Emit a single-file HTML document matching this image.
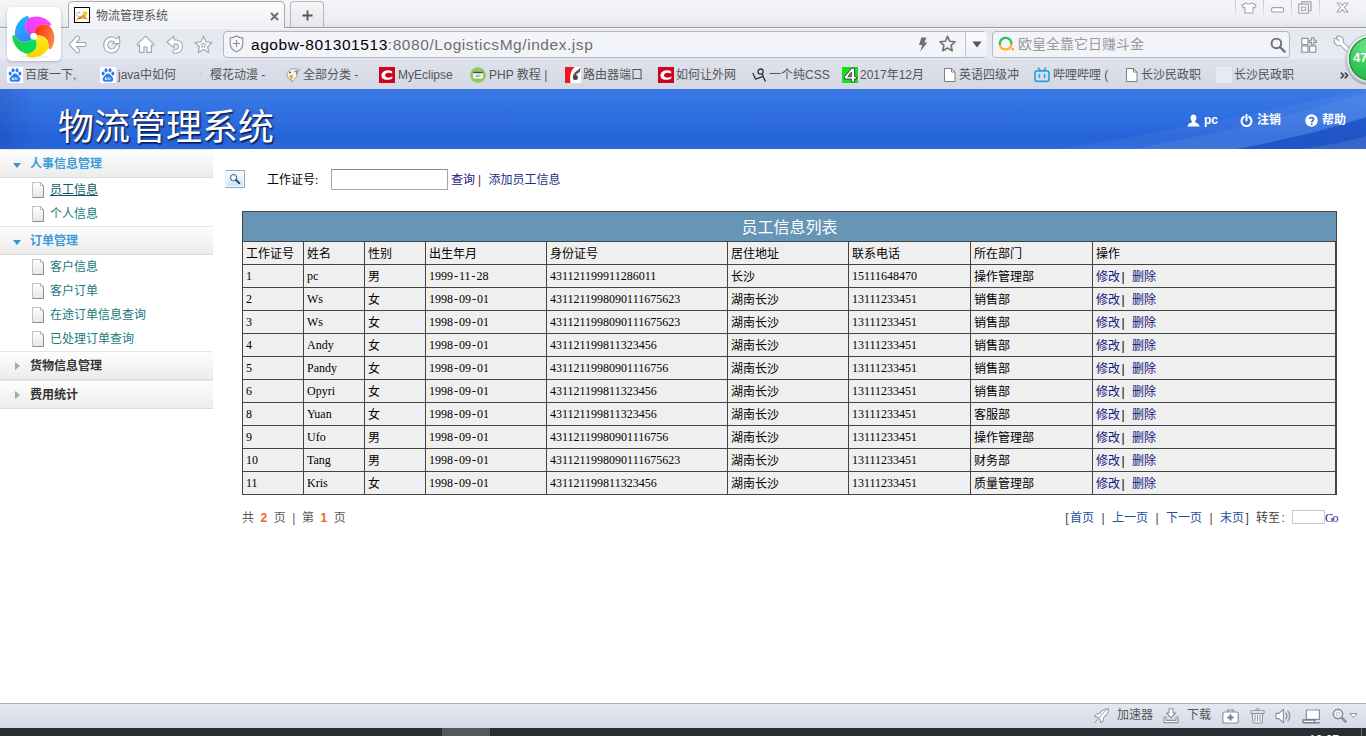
<!DOCTYPE html>
<html lang="zh-CN">
<head>
<meta charset="utf-8">
<title>物流管理系统</title>
<style>
*{box-sizing:border-box;margin:0;padding:0}
html,body{width:1366px;height:736px;overflow:hidden;background:#fff}
body{position:relative;font-family:"Liberation Sans","Noto Sans CJK SC",sans-serif;font-size:12px;color:#000}
.abs{position:absolute}
a{text-decoration:none;color:inherit}
/* ---------- browser chrome ---------- */
#chrome{position:absolute;left:0;top:0;width:1366px;height:89px;background:linear-gradient(#f4f5f7 0,#eceef2 20px,#e2e4ea 27px,#e6e8ef 28px,#e9ebf2 58px,#dfe2ec 60px,#d4d8e4 88px)}
#tabline{position:absolute;left:0;top:27px;width:1366px;height:1px;background:#9a9ca3}
#tabline2{position:absolute;left:0;top:28px;width:1366px;height:1px;background:#f6f7fa}
#tab{position:absolute;left:68px;top:1px;width:217px;height:27px;background:linear-gradient(#fcfcfd,#eff0f4);border:1px solid #a9abb2;border-bottom:none;border-radius:5px 5px 0 0}
#tab .t{position:absolute;left:27px;top:6px;font-size:12px;color:#555;white-space:nowrap;line-height:16px}
#tab .x{position:absolute;left:201px;top:10px;width:9px;height:9px}
#newtab{position:absolute;left:290px;top:1px;width:34px;height:26px;background:linear-gradient(#f6f6f8,#e6e7ec);border:1px solid #b5b7be;border-bottom:none;border-radius:4px 4px 0 0}
#logo{position:absolute;left:7px;top:7px;width:54px;height:54px;background:#fff;border-radius:5px;box-shadow:0 1px 3px rgba(80,90,120,.35)}
#addr{position:absolute;left:223px;top:31px;width:764px;height:27px;border:1px solid #b4b7c0;border-radius:4px;background:#f3f4f9}
#addr .u{position:absolute;left:27px;top:4px;font-size:15.5px;line-height:18px;white-space:nowrap;color:#6e6e6e;letter-spacing:.56px}
#addr .u b{font-weight:normal;color:#000}
#addr .sep{position:absolute;left:741px;top:0;width:22px;height:25px;border-left:1px solid #c0c3cb;background:linear-gradient(#fafbfd,#eef0f5);border-radius:0 3px 3px 0}
#srch{position:absolute;left:992px;top:31px;width:298px;height:27px;border:1px solid #b4b7c0;border-radius:4px;background:#f3f4f9}
#srch .p{position:absolute;left:25px;top:4px;font-size:14px;line-height:17px;color:#9a9a9a;white-space:nowrap}
.bm{position:absolute;top:66px;height:18px;line-height:18px;font-size:12px;color:#555;white-space:nowrap}
.bi{position:absolute;top:67px;width:16px;height:16px}
/* ---------- app header ---------- */
#hdr{position:absolute;left:0;top:89px;width:1366px;height:60px;background:linear-gradient(90deg,rgba(0,10,90,.14),rgba(0,10,90,0) 36px),linear-gradient(#3a79e6 0,#2f6ee0 28px,#2563d9 48px,#2a67da 60px);overflow:hidden}
#hdr h1{position:absolute;left:58px;top:15px;font-size:36px;line-height:48px;font-weight:400;color:#fff;white-space:nowrap;text-shadow:1px 1px 2px rgba(0,0,40,.8),1px 2px 1px rgba(0,0,40,.35);letter-spacing:0}
.hl{position:absolute;top:23px;font-size:12px;font-weight:bold;line-height:16px;color:#fff;white-space:nowrap}
/* ---------- sidebar ---------- */
#side{position:absolute;left:0;top:149px;width:213px}
.sh{height:29px;border-bottom:1px solid #dcdcdc;border-top:1px solid #e6e6e6;background:linear-gradient(#fdfdfd,#ececec);position:relative;font-weight:bold;font-size:12px;line-height:28px;padding-left:30px;color:#333}
.sh.open{color:#3c9bd8}
.sh i{position:absolute}
.sh.open i{left:13px;top:13px;border:4.5px solid transparent;border-top:5px solid #3399d4;border-bottom:none}
.sh.closed i{left:15px;top:10px;border:4.5px solid transparent;border-left:5px solid #a8a8a8;border-right:none}
.si{height:24px;position:relative;line-height:24px;padding-left:50px;font-size:12px;color:#167a7c;white-space:nowrap}
.si svg{position:absolute;left:32px;top:4px}
/* ---------- main ---------- */
.sim{font-family:"Liberation Serif","Noto Sans CJK SC",serif;font-size:12px;word-spacing:3px}
.hy,.vb{display:inline-block;width:6px;text-align:center}
.vb{font-family:"Liberation Sans",sans-serif}
#tbl{position:absolute;left:242px;top:211px;width:1094px;border-collapse:collapse;table-layout:fixed;background:#efefef}
#tbl td,#tbl th{border:1px solid #444;height:23px;padding:0 0 0 3px;text-align:left;font-weight:normal;font-size:12px;line-height:14px;white-space:nowrap;overflow:hidden;vertical-align:middle}
#tbl th,#tbl td.c{padding-top:2px}
#tbl th.cap{height:30px;background:#6795b5;color:#fff;text-align:center;font-size:16px;font-family:"Liberation Sans","Noto Sans CJK SC",sans-serif;padding:2px 0 0 0}
#tbl a{color:#15157a}
#sbtn{position:absolute;left:225px;top:170px;width:20px;height:18px;background:linear-gradient(#f6f9fe,#e6f1fc 45%,#cbe4fa);border:1px solid #8faacb;border-left-color:#dbe8f6;box-shadow:inset 0 0 0 1px rgba(255,255,255,.7)}
#sinp{position:absolute;left:331px;top:169px;width:117px;height:21px;background:#fff;border:1px solid #a5a5a5;border-top-color:#8a8a8a}
#pgl{position:absolute;left:242px;top:509px;font-size:12px;line-height:18px;color:#5a5a5a;white-space:nowrap;letter-spacing:1px;word-spacing:1.2px}
#pgl b{color:#f26522}
#pgr{position:absolute;left:1064px;top:509px;font-size:12px;line-height:18px;color:#444;white-space:nowrap}
#pgr a{color:#1d4f9c}
#pgr .gi{display:inline-block;width:33px;height:14px;border:1px solid #c8c8c8;background:#fff;vertical-align:-2px;margin:0}
#pgr .go{color:#1a1aa0;letter-spacing:-1.3px}
/* ---------- status ---------- */
#status{position:absolute;left:0;top:703px;width:1366px;height:25px;background:linear-gradient(#e4e8f0,#d5dae6);border-top:1px solid #a9afbd}
#task{position:absolute;left:0;top:728px;width:1366px;height:8px;background:#2a2e32;overflow:hidden}
</style>
</head>
<body>
<div id="chrome">
  <div id="tabline"></div><div id="tabline2"></div>
  <div id="tab"><svg class="abs" style="left:5px;top:5px" width="16" height="16" viewBox="0 0 16 16"><rect x=".5" y=".5" width="15" height="15" fill="#fff" stroke="#000"/><path d="M5.6 9.4 C3.6 9.6 2.2 8.2 2.6 6.6 C3 5 4.6 4.6 5.8 5.4" fill="none" stroke="#9a9a9a" stroke-width=".8"/><path d="M8.4 3.2 L9.4 4.8 H12 L13 3.2 L13.2 7.6 L11.6 9.4 L9.4 9 Z" fill="#f0c24a"/><path d="M9.2 7.6 L4.6 10 L1.6 13.4 L5 12.2 L8.8 11.4 L14 12.8 L11.4 9.6 Z" fill="#dc9c2c"/><path d="M5.2 5.6 L6.6 6.2 L5.8 6.8 Z M5.4 11 L6.6 11.8 L5.6 12 Z" fill="#222"/></svg><span class="t">物流管理系统</span><svg class="x" viewBox="0 0 9 9"><path d="M1 1 L8 8 M8 1 L1 8" stroke="#6b6b6b" stroke-width="1.8"/></svg></div>
  <div id="newtab"><svg class="abs" style="left:11px;top:8px" width="11" height="11" viewBox="0 0 11 11"><path d="M5.5 .5 V10.5 M.5 5.5 H10.5" stroke="#555" stroke-width="1.8"/></svg></div>
  <div id="logo"><svg width="54" height="54" viewBox="0 0 54 54"><defs><linearGradient id="pg0" x1=".15" y1="1" x2=".95" y2=".2"><stop offset="0" stop-color="#e03cf3"/><stop offset="1" stop-color="#ff48ff"/></linearGradient><linearGradient id="pg1" x1=".15" y1="1" x2=".95" y2=".2"><stop offset="0" stop-color="#ff2810"/><stop offset="1" stop-color="#ff8e44"/></linearGradient><linearGradient id="pg2" x1=".15" y1="1" x2=".95" y2=".2"><stop offset="0" stop-color="#ffea20"/><stop offset="1" stop-color="#ffd000"/></linearGradient><linearGradient id="pg3" x1=".15" y1="1" x2=".95" y2=".2"><stop offset="0" stop-color="#00e45c"/><stop offset="1" stop-color="#22cf4c"/></linearGradient><linearGradient id="pg4" x1=".15" y1="1" x2=".95" y2=".2"><stop offset="0" stop-color="#3b7eff"/><stop offset="1" stop-color="#1ab4ff"/></linearGradient></defs><ellipse cx="27" cy="50" rx="15" ry="1.6" fill="#000" fill-opacity=".05"/><g transform="translate(26.8 29.3)"><path d="M-2.9 -1.4 C-9.0 -4.0 -11.0 -12.0 -4.9 -18.2 A18.5 18.5 0 0 1 17.7 -12.0 L15.8 -10.2 C8.0 -14.2 1.0 -9.8 0.4 -3.2 Z" fill="url(#pg0)" transform="rotate(0)"/><path d="M-2.9 -1.4 C-9.0 -4.0 -11.0 -12.0 -4.9 -18.2 A18.5 18.5 0 0 1 17.7 -12.0 L15.8 -10.2 C8.0 -14.2 1.0 -9.8 0.4 -3.2 Z" fill="url(#pg1)" transform="rotate(72)"/><path d="M-2.9 -1.4 C-9.0 -4.0 -11.0 -12.0 -4.9 -18.2 A18.5 18.5 0 0 1 17.7 -12.0 L15.8 -10.2 C8.0 -14.2 1.0 -9.8 0.4 -3.2 Z" fill="url(#pg2)" transform="rotate(144)"/><path d="M-2.9 -1.4 C-9.0 -4.0 -11.0 -12.0 -4.9 -18.2 A18.5 18.5 0 0 1 17.7 -12.0 L15.8 -10.2 C8.0 -14.2 1.0 -9.8 0.4 -3.2 Z" fill="url(#pg3)" transform="rotate(216)"/><path d="M-2.9 -1.4 C-9.0 -4.0 -11.0 -12.0 -4.9 -18.2 A18.5 18.5 0 0 1 17.7 -12.0 L15.8 -10.2 C8.0 -14.2 1.0 -9.8 0.4 -3.2 Z" fill="url(#pg4)" transform="rotate(288)"/><circle r="3.4" fill="#fff"/></g></svg></div>

  <svg class="abs" style="left:69px;top:35px" width="18" height="19" viewBox="0 0 18 19"><g fill="none" stroke-linecap="round" stroke-linejoin="round"><path d="M8.6 3.2 L2.8 9.5 L8.6 15.8 M3.4 9.5 H15.2" stroke="#a3a5ab" stroke-width="5"/><path d="M8.6 3.2 L2.8 9.5 L8.6 15.8 M3.4 9.5 H15.2" stroke="#fff" stroke-width="3"/></g></svg>
  <svg class="abs" style="left:102px;top:35px" width="19" height="19" viewBox="0 0 19 19"><path d="M14 5.8 A6 6 0 1 0 15.4 11.6" fill="none" stroke="#a3a5ab" stroke-width="5" stroke-linecap="round"/><path d="M10.8 8.8 L17.8 8.4 L17.4 1.2 Z" fill="#fff" stroke="#a3a5ab" stroke-width="1.1" stroke-linejoin="round"/><path d="M14 5.8 A6 6 0 1 0 15.4 11.6" fill="none" stroke="#fff" stroke-width="3" stroke-linecap="round"/><path d="M12 8 L17 7.7 L16.7 2.8 Z" fill="#fff"/></svg>
  <svg class="abs" style="left:136px;top:35px" width="19" height="19" viewBox="0 0 19 19"><path d="M9.5 1.2 L18 9.4 L16.6 10.8 L15.4 9.8 V17.4 H11 V12 H8 V17.4 H3.6 V9.8 L2.4 10.8 L1 9.4 Z" fill="#fff" stroke="#a3a5ab" stroke-width="1.1" stroke-linejoin="round"/></svg>
  <svg class="abs" style="left:166px;top:35px" width="19" height="19" viewBox="0 0 19 19"><path d="M6 7 H10.8 A4.7 4.7 0 0 1 10.8 16.2 L8.8 16.4" fill="none" stroke="#a3a5ab" stroke-width="4.8" stroke-linecap="round"/><path d="M1 7 L8 1.2 V12.8 Z" fill="#fff" stroke="#a3a5ab" stroke-width="1.1" stroke-linejoin="round"/><path d="M6 7 H10.8 A4.7 4.7 0 0 1 10.8 16.2 L8.8 16.4" fill="none" stroke="#fff" stroke-width="2.8" stroke-linecap="round"/></svg>
  <svg class="abs" style="left:194px;top:35px" width="19" height="19" viewBox="0 0 19 19"><path d="M9.5 1.2 L12 6.8 L18 7.5 L13.6 11.6 L14.8 17.6 L9.5 14.6 L4.2 17.6 L5.4 11.6 L1 7.5 L7 6.8 Z" fill="#fff" stroke="#a3a5ab" stroke-width="1.2" stroke-linejoin="round"/><path d="M9.5 7.4 L10.3 9.2 L12.2 9.4 L10.8 10.7 L11.2 12.6 L9.5 11.6 L7.8 12.6 L8.2 10.7 L6.8 9.4 L8.7 9.2 Z" fill="#eceef3" stroke="#a3a5ab" stroke-width=".9" stroke-linejoin="round"/></svg>
  <div id="addr"><span class="u"><b>agobw-801301513</b>:8080/LogisticsMg/index.jsp</span><div class="sep"></div>
    <svg class="abs" style="left:5px;top:3px" width="15" height="18" viewBox="0 0 15 18"><path d="M7.5 1 C5.5 2.4 3.5 2.9 1.2 3 V9 C1.2 12.6 4 15.4 7.5 16.8 C11 15.4 13.8 12.6 13.8 9 V3 C11.5 2.9 9.5 2.4 7.5 1 Z" fill="#f6f7fa" stroke="#8a8c92" stroke-width="1.1"/><path d="M7.5 5 V12 M4 8.5 H11" stroke="#8a8c92" stroke-width="1.1"/></svg>
    <svg class="abs" style="left:694px;top:5px" width="10" height="15" viewBox="0 0 10 15"><path d="M3.4 .5 H8.6 L6.4 5.6 H9.4 L2.2 14.5 L4.2 8 H1 Z" fill="#6f6f6f"/></svg>
    <svg class="abs" style="left:715px;top:3px" width="17" height="17" viewBox="0 0 17 17"><path d="M8.5 1.3 L10.7 6.2 L16 6.8 L12.1 10.4 L13.2 15.7 L8.5 13 L3.8 15.7 L4.9 10.4 L1 6.8 L6.3 6.2 Z" fill="none" stroke="#727272" stroke-width="1.6" stroke-linejoin="round"/></svg>
    <svg class="abs" style="left:748px;top:9px" width="10" height="7" viewBox="0 0 10 7"><path d="M.4 .6 H9.6 L5 6.4 Z" fill="#555"/></svg>
  </div>
  <div id="srch"><svg class="abs" style="left:4.5px;top:4px" width="17" height="16" viewBox="0 0 17 16"><path d="M2 9 A5.8 5.8 0 1 1 13.4 8.2" fill="none" stroke="#27c24c" stroke-width="2.3"/><path d="M13.4 8.2 A5.8 5.8 0 0 1 2 9" fill="none" stroke="#ffb61e" stroke-width="2.3"/><circle cx="14.8" cy="13.2" r="1.2" fill="#ff9a1a"/></svg><svg class="abs" style="left:277px;top:5px" width="16" height="16" viewBox="0 0 16 16"><circle cx="6.4" cy="6.4" r="4.8" fill="none" stroke="#6f6f6f" stroke-width="1.9"/><path d="M10 10 L14.6 14.6" stroke="#6f6f6f" stroke-width="2.4" stroke-linecap="round"/></svg><span class="p">欧皇全靠它日赚斗金</span></div>
  <svg class="bi" style="left:7px" viewBox="0 0 16 16"><rect width="16" height="16" fill="#fff"/><g fill="#2b7cf0"><ellipse cx="3.1" cy="6.6" rx="1.5" ry="2"/><ellipse cx="6" cy="3.3" rx="1.5" ry="2.1"/><ellipse cx="10" cy="3.3" rx="1.5" ry="2.1"/><ellipse cx="12.9" cy="6.6" rx="1.5" ry="2"/><path d="M8 6.6 C10 6.6 10.8 8.6 12.4 10 C14 11.6 13.4 14.6 11 14.8 C9.6 14.9 9 14.4 8 14.4 C7 14.4 6.4 14.9 5 14.8 C2.6 14.6 2 11.6 3.6 10 C5.2 8.6 6 6.6 8 6.6 Z"/></g><path d="M5.4 10.4 V12.6 H7 V10.4 M8.6 10.6 V12 C8.6 12.8 10.2 12.8 10.2 12 V10.6" stroke="#fff" stroke-width=".9" fill="none"/></svg>
  <span class="bm" style="left:25px">百度一下,</span>
  <svg class="bi" style="left:100px" viewBox="0 0 16 16"><rect width="16" height="16" fill="#fff"/><g fill="#2b7cf0"><ellipse cx="3.1" cy="6.6" rx="1.5" ry="2"/><ellipse cx="6" cy="3.3" rx="1.5" ry="2.1"/><ellipse cx="10" cy="3.3" rx="1.5" ry="2.1"/><ellipse cx="12.9" cy="6.6" rx="1.5" ry="2"/><path d="M8 6.6 C10 6.6 10.8 8.6 12.4 10 C14 11.6 13.4 14.6 11 14.8 C9.6 14.9 9 14.4 8 14.4 C7 14.4 6.4 14.9 5 14.8 C2.6 14.6 2 11.6 3.6 10 C5.2 8.6 6 6.6 8 6.6 Z"/></g><path d="M5.4 10.4 V12.6 H7 V10.4 M8.6 10.6 V12 C8.6 12.8 10.2 12.8 10.2 12 V10.6" stroke="#fff" stroke-width=".9" fill="none"/></svg>
  <span class="bm" style="left:118px">java中如何</span>
  <span class="bm" style="left:210px">樱花动漫 -</span>
  <svg class="bi" style="left:285px" viewBox="0 0 16 16"><path d="M2 8 C2 4 6 1.4 10 1.6 C12.6 1.7 14.6 2.6 15 3.4 L12.6 4 C13.4 7 11.4 11 8.6 13 L7 15 L6.4 12.6 C3.6 12.4 2 10.4 2 8 Z" fill="#f4f4f4" stroke="#8a8a8a" stroke-width=".8"/><circle cx="6.2" cy="9.8" r="2" fill="#f2b01e"/><circle cx="5" cy="5.4" r=".9" fill="#444"/><path d="M9 4.4 L12 3.6 L11.4 7.4" fill="none" stroke="#666" stroke-width=".9"/></svg>
  <span class="bm" style="left:303px">全部分类 -</span>
  <svg class="bi" style="left:379px" viewBox="0 0 16 16"><rect width="16" height="16" fill="#d0021b"/><path d="M13.2 4.6 C11.4 3.2 8.4 2.8 6 3.8 C3.4 4.9 2.2 7 2.4 9 C2.6 11.2 4.6 12.6 7.2 12.8 C9.6 13 12 12.2 13.4 11.2 L13.4 9.6 C12 10.4 10.2 10.8 8.6 10.6 C7 10.4 6 9.4 6 8.2 C6 7 7 6.1 8.6 5.9 C10.2 5.7 12 6 13.2 6.6 Z" fill="#fff"/></svg>
  <span class="bm" style="left:398px">MyEclipse</span>
  <svg class="bi" style="left:470px" viewBox="0 0 16 16"><circle cx="8" cy="8" r="7.8" fill="#8ccc4d"/><rect x="3.2" y="4.6" width="9.6" height="7" rx=".8" fill="#fff"/><rect x="3.2" y="4.6" width="9.6" height="1.6" fill="#3b4a5a"/><path d="M6.8 7.6 L5.6 8.8 L6.8 10 M9.2 7.6 L10.4 8.8 L9.2 10 M8.4 7.4 L7.6 10.2" stroke="#3b4a5a" stroke-width=".7" fill="none"/></svg>
  <span class="bm" style="left:489px">PHP 教程 |</span>
  <svg class="bi" style="left:565px" viewBox="0 0 16 16"><rect width="16" height="16" fill="#fff"/><path d="M0 0 H9.6 C6 3.4 4.4 8 5.4 16 H0 Z" fill="#f0141e"/><path d="M8 9.4 C8 7 10 5 12.4 3.4 L15.6 .6 L14.8 5.2 C13.6 5.4 12.4 6.2 11.8 7.2 Z" fill="#555"/><circle cx="10.4" cy="10.6" r="2.5" fill="#444"/></svg>
  <span class="bm" style="left:583px">路由器端口</span>
  <svg class="bi" style="left:658px" viewBox="0 0 16 16"><rect width="16" height="16" fill="#d0021b"/><path d="M13.2 4.6 C11.4 3.2 8.4 2.8 6 3.8 C3.4 4.9 2.2 7 2.4 9 C2.6 11.2 4.6 12.6 7.2 12.8 C9.6 13 12 12.2 13.4 11.2 L13.4 9.6 C12 10.4 10.2 10.8 8.6 10.6 C7 10.4 6 9.4 6 8.2 C6 7 7 6.1 8.6 5.9 C10.2 5.7 12 6 13.2 6.6 Z" fill="#fff"/></svg>
  <span class="bm" style="left:676px">如何让外网</span>
  <svg class="bi" style="left:752px" viewBox="0 0 16 16"><circle cx="8.6" cy="4.6" r="2.6" fill="none" stroke="#333" stroke-width="1.3"/><path d="M.8 6 L3.6 12.2 L11 9.4 L13.6 14.6 M11 9.4 L10.6 6.8" fill="none" stroke="#333" stroke-width="1.3" stroke-linejoin="round"/></svg>
  <span class="bm" style="left:769px">一个纯CSS</span>
  <svg class="bi" style="left:842px" viewBox="0 0 16 16"><rect width="16" height="16" fill="#18e01e"/><path d="M9.6 1.2 H12.6 V9.6 H14.4 V12 H12.6 V15 H9.4 V12 H2.4 V9.8 Z M9.4 5.2 L6 9.6 H9.4 Z" fill="#fff" stroke="#444" stroke-width="1" fill-rule="evenodd"/></svg>
  <span class="bm" style="left:860px">2017年12月</span>
  <svg class="bi" style="left:942px" viewBox="0 0 16 16"><path d="M2.5 1.5 H9.5 L13 5 V14.5 H2.5 Z" fill="#fff" stroke="#7b7d84"/><path d="M9.5 1.5 V5 H13" fill="none" stroke="#7b7d84"/></svg>
  <span class="bm" style="left:959px">英语四级冲</span>
  <svg class="bi" style="left:1034px" viewBox="0 0 16 16"><path d="M4.4 1 L6.4 3.6 M11.6 1 L9.6 3.6" stroke="#20a6de" stroke-width="1.5" stroke-linecap="round"/><rect x="1" y="3.8" width="14" height="10.6" rx="2.2" fill="none" stroke="#20a6de" stroke-width="1.7"/><path d="M5.4 7.6 V10.4 M10.6 7.6 V10.4" stroke="#20a6de" stroke-width="1.6" stroke-linecap="round"/></svg>
  <span class="bm" style="left:1053px">哔哩哔哩 (</span>
  <svg class="bi" style="left:1124px" viewBox="0 0 16 16"><path d="M2.5 1.5 H9.5 L13 5 V14.5 H2.5 Z" fill="#fff" stroke="#7b7d84"/><path d="M9.5 1.5 V5 H13" fill="none" stroke="#7b7d84"/></svg>
  <span class="bm" style="left:1141px">长沙民政职</span>
  <svg class="bi" style="left:1216px" viewBox="0 0 16 16"><rect width="16" height="16" fill="#e8ebf6"/></svg>
  <span class="bm" style="left:1234px">长沙民政职</span>
  <svg class="abs" style="left:1340px;top:72px" width="9" height="7" viewBox="0 0 9 7"><path d="M.8 .6 L3.6 3.5 L.8 6.4 M4.8 .6 L7.6 3.5 L4.8 6.4" fill="none" stroke="#4a4a4a" stroke-width="1.7"/></svg>
  <div class="abs" style="left:199px;top:73px;width:3px;height:2px;background:#f6b8d6;border-radius:1px"></div>

  <div class="abs" style="left:1235px;top:0;width:1px;height:16px;background:linear-gradient(#c3c5cc,#e9eaee)"></div>
  <div class="abs" style="left:1263px;top:0;width:1px;height:16px;background:linear-gradient(#c3c5cc,#e9eaee)"></div>
  <div class="abs" style="left:1291px;top:0;width:1px;height:16px;background:linear-gradient(#c3c5cc,#e9eaee)"></div>
  <div class="abs" style="left:1319px;top:0;width:1px;height:16px;background:linear-gradient(#c3c5cc,#e9eaee)"></div>
  <svg class="abs" style="left:1241px;top:2px" width="16" height="12" viewBox="0 0 16 12"><path d="M5 1 C6 2.4 10 2.4 11 1 L15 3 L13.6 6 L12 5.4 V11 H4 V5.4 L2.4 6 L1 3 Z" fill="#fff" stroke="#a2a4ab" stroke-width="1.1" stroke-linejoin="round"/></svg>
  <svg class="abs" style="left:1271px;top:7px" width="13" height="6" viewBox="0 0 13 6"><rect x=".6" y=".6" width="11.8" height="4.4" rx="1" fill="#fff" stroke="#a2a4ab" stroke-width="1.1"/></svg>
  <svg class="abs" style="left:1298px;top:1px" width="14" height="13" viewBox="0 0 14 13"><path d="M3.6 3 V.8 H13 V9.6 H10.6" fill="none" stroke="#a2a4ab" stroke-width="1.2"/><rect x=".8" y="3.2" width="9.6" height="9" fill="#fff" stroke="#a2a4ab" stroke-width="1.2"/><rect x="3.4" y="6" width="4.4" height="3.6" fill="#eef" stroke="#a2a4ab" stroke-width="1"/></svg>
  <svg class="abs" style="left:1336px;top:2px" width="13" height="11" viewBox="0 0 13 11"><path d="M1 1 H4.4 L6.5 3.6 L8.6 1 H12 L8.4 5.5 L12 10 H8.6 L6.5 7.4 L4.4 10 H1 L4.6 5.5 Z" fill="#fff" stroke="#a2a4ab" stroke-width="1.1" stroke-linejoin="round"/></svg>
  <svg class="abs" style="left:1301px;top:37px" width="16" height="16" viewBox="0 0 16 16"><g fill="#fff" stroke="#8b8d94" stroke-width="1.1"><rect x=".8" y="1.4" width="6.2" height="6.2"/><rect x=".8" y="9" width="6.2" height="6.2"/><rect x="8.6" y="9" width="6.2" height="6.2"/><path d="M10.6 .8 H12.8 V3.2 H15.2 V5.4 H12.8 V7.8 H10.6 V5.4 H8.2 V3.2 H10.6 Z"/></g></svg>
  <svg class="abs" style="left:1333px;top:35px" width="22" height="22" viewBox="0 0 22 22"><path d="M8 8 L20 19.6" stroke="#a0a2a9" stroke-width="5.2" stroke-linecap="round" fill="none"/><circle cx="5.8" cy="5.8" r="4.7" fill="#fff" stroke="#a0a2a9" stroke-width="1.1"/><path d="M8 8 L20 19.6" stroke="#fff" stroke-width="3.2" stroke-linecap="round" fill="none"/><path d="M-.5 2.6 L5.4 4 L6.6 6.4 L4.4 6.2 L2.6 -.5 Z" fill="#e9ebf2"/><path d="M1.4 3.2 L5.4 4.2 L6.4 6.4 M3.2 1.4 L4.2 5.4" fill="none" stroke="#a0a2a9" stroke-width="1" stroke-linejoin="round"/></svg>
  <div class="abs" style="left:1346px;top:34px;width:50px;height:50px;border-radius:50%;background:linear-gradient(#f4f5f7,#d9dce2);box-shadow:0 1px 2px rgba(0,0,0,.45),inset 0 0 0 1px #b9bcc4"></div>
  <div class="abs" style="left:1349px;top:37px;width:44px;height:44px;border-radius:50%;background:radial-gradient(circle at 38% 22%,#6ee08a,#3ccb5c 40%,#27b84a 75%,#1da040);box-shadow:inset 0 0 0 1px #148a34"></div>
  <div class="abs" style="left:1353px;top:50px;font:bold 13px/16px 'Liberation Sans',sans-serif;color:#fff;white-space:nowrap">47</div>
</div>
<div id="hdr">
  <svg class="abs" style="left:0;top:0" width="1366" height="60" viewBox="0 0 1366 60"><path d="M1060 60 C1180 40 1290 18 1366 0 V60 Z" fill="#fff" fill-opacity=".05"/><path d="M1133 60 C1220 44 1300 24 1366 4 V60 Z" fill="#fff" fill-opacity=".06"/><path d="M1236 60 C1290 50 1330 40 1366 28 V60 Z" fill="#0a3cb4" fill-opacity=".55"/><path d="M1300 60 C1330 56 1350 52 1366 47 V60 Z" fill="#fff" fill-opacity=".10"/></svg>
  <h1>物流管理系统</h1>
  <svg class="abs" style="left:1187px;top:25px" width="13" height="13" viewBox="0 0 13 13"><path d="M6.5 .6 C8.4 .6 9.4 2 9.4 3.8 C9.4 5.4 8.8 6.6 8 7.4 V8.2 C9.6 8.8 12.2 9.6 12.6 12.4 H.4 C.8 9.6 3.4 8.8 5 8.2 V7.4 C4.2 6.6 3.6 5.4 3.6 3.8 C3.6 2 4.6 .6 6.5 .6 Z" fill="#fff"/></svg>
  <span class="hl" style="left:1204px">pc</span>
  <svg class="abs" style="left:1240px;top:25px" width="13" height="13" viewBox="0 0 13 13"><path d="M3.8 2.8 A5 5 0 1 0 9.2 2.8" fill="none" stroke="#fff" stroke-width="2" stroke-linecap="round"/><path d="M6.5 .8 V6.4" stroke="#fff" stroke-width="2" stroke-linecap="round"/></svg>
  <span class="hl" style="left:1257px">注销</span>
  <svg class="abs" style="left:1305px;top:25px" width="13" height="13" viewBox="0 0 13 13"><circle cx="6.5" cy="6.5" r="6.2" fill="#fff"/><path d="M4.6 5 C4.6 3 8.6 3 8.6 5.2 C8.6 6.6 6.7 6.6 6.7 8.2" fill="none" stroke="#2a66dc" stroke-width="1.6"/><rect x="5.9" y="9.2" width="1.6" height="1.6" fill="#2a66dc"/></svg>
  <span class="hl" style="left:1322px">帮助</span>
</div>
<svg width="0" height="0" style="position:absolute"><defs><linearGradient id="dg" x1="0" y1="0" x2="0" y2="1"><stop offset="0" stop-color="#fff"/><stop offset="1" stop-color="#e6e6e6"/></linearGradient></defs></svg>
<div id="side">
  <div class="sh open"><i></i>人事信息管理</div>
  <div class="si"><svg width="13" height="16" viewBox="0 0 13 16"><path d="M.5 .5h8l3 3v12h-11z" fill="url(#dg)" stroke="#c2c2c2"/><path d="M11.5 3.5v12h-11" fill="none" stroke="#8e8e8e"/><path d="M8.5 .5v3h3z" fill="#fff" stroke="#a8a8a8" stroke-width=".8"/></svg><span style="text-decoration:underline;color:#0a5c5e">员工信息</span></div>
  <div class="si"><svg width="13" height="16" viewBox="0 0 13 16"><path d="M.5 .5h8l3 3v12h-11z" fill="url(#dg)" stroke="#c2c2c2"/><path d="M11.5 3.5v12h-11" fill="none" stroke="#8e8e8e"/><path d="M8.5 .5v3h3z" fill="#fff" stroke="#a8a8a8" stroke-width=".8"/></svg>个人信息</div>
  <div class="sh open"><i></i>订单管理</div>
  <div class="si"><svg width="13" height="16" viewBox="0 0 13 16"><path d="M.5 .5h8l3 3v12h-11z" fill="url(#dg)" stroke="#c2c2c2"/><path d="M11.5 3.5v12h-11" fill="none" stroke="#8e8e8e"/><path d="M8.5 .5v3h3z" fill="#fff" stroke="#a8a8a8" stroke-width=".8"/></svg>客户信息</div>
  <div class="si"><svg width="13" height="16" viewBox="0 0 13 16"><path d="M.5 .5h8l3 3v12h-11z" fill="url(#dg)" stroke="#c2c2c2"/><path d="M11.5 3.5v12h-11" fill="none" stroke="#8e8e8e"/><path d="M8.5 .5v3h3z" fill="#fff" stroke="#a8a8a8" stroke-width=".8"/></svg>客户订单</div>
  <div class="si"><svg width="13" height="16" viewBox="0 0 13 16"><path d="M.5 .5h8l3 3v12h-11z" fill="url(#dg)" stroke="#c2c2c2"/><path d="M11.5 3.5v12h-11" fill="none" stroke="#8e8e8e"/><path d="M8.5 .5v3h3z" fill="#fff" stroke="#a8a8a8" stroke-width=".8"/></svg>在途订单信息查询</div>
  <div class="si"><svg width="13" height="16" viewBox="0 0 13 16"><path d="M.5 .5h8l3 3v12h-11z" fill="url(#dg)" stroke="#c2c2c2"/><path d="M11.5 3.5v12h-11" fill="none" stroke="#8e8e8e"/><path d="M8.5 .5v3h3z" fill="#fff" stroke="#a8a8a8" stroke-width=".8"/></svg>已处理订单查询</div>
  <div class="sh closed"><i></i>货物信息管理</div>
  <div class="sh closed"><i></i>费用统计</div>
</div>
<div id="main">
  <div id="sbtn"><svg class="abs" style="left:3px;top:2px" width="12" height="12" viewBox="0 0 12 12"><circle cx="4.6" cy="4.6" r="3.1" fill="#fff" fill-opacity=".6" stroke="#3b6a96" stroke-width="1.3" stroke-dasharray="1.6 .5"/><path d="M7 7 L10.4 10.2" stroke="#1f4e7c" stroke-width="1.9" stroke-linecap="round"/></svg></div>
  <div class="abs sim" style="left:267px;top:172px;line-height:16px;white-space:nowrap">工作证号:</div>
  <div id="sinp"></div>
  <div class="abs sim" style="left:451px;top:172px;line-height:16px;white-space:nowrap"><a style="color:#15157a">查询</a><span style="color:#8a2030"><span class="vb" style="margin-left:1.5px">|</span> </span><a style="color:#1c2f88">添加员工信息</a></div>
  <table id="tbl" class="sim"><colgroup><col style="width:61px"><col style="width:61px"><col style="width:61px"><col style="width:121px"><col style="width:181px"><col style="width:121px"><col style="width:122px"><col style="width:122px"><col style="width:244px"></colgroup>
<tr><th class="cap" colspan="9">员工信息列表</th></tr>
<tr><th>工作证号</th><th>姓名</th><th>性别</th><th>出生年月</th><th>身份证号</th><th>居住地址</th><th>联系电话</th><th>所在部门</th><th>操作</th></tr>
<tr><td>1</td><td>pc</td><td class="c">男</td><td>1999<span class="hy">-</span>11<span class="hy">-</span>28</td><td>431121199911286011</td><td class="c">长沙</td><td>15111648470</td><td class="c">操作管理部</td><td class="c"><a>修改</a><span class="vb">|</span> <a>删除</a></td></tr>
<tr><td>2</td><td>Ws</td><td class="c">女</td><td>1998<span class="hy">-</span>09<span class="hy">-</span>01</td><td>4311211998090111675623</td><td class="c">湖南长沙</td><td>13111233451</td><td class="c">销售部</td><td class="c"><a>修改</a><span class="vb">|</span> <a>删除</a></td></tr>
<tr><td>3</td><td>Ws</td><td class="c">女</td><td>1998<span class="hy">-</span>09<span class="hy">-</span>01</td><td>4311211998090111675623</td><td class="c">湖南长沙</td><td>13111233451</td><td class="c">销售部</td><td class="c"><a>修改</a><span class="vb">|</span> <a>删除</a></td></tr>
<tr><td>4</td><td>Andy</td><td class="c">女</td><td>1998<span class="hy">-</span>09<span class="hy">-</span>01</td><td>431121199811323456</td><td class="c">湖南长沙</td><td>13111233451</td><td class="c">销售部</td><td class="c"><a>修改</a><span class="vb">|</span> <a>删除</a></td></tr>
<tr><td>5</td><td>Pandy</td><td class="c">女</td><td>1998<span class="hy">-</span>09<span class="hy">-</span>01</td><td>43112119980901116756</td><td class="c">湖南长沙</td><td>13111233451</td><td class="c">销售部</td><td class="c"><a>修改</a><span class="vb">|</span> <a>删除</a></td></tr>
<tr><td>6</td><td>Opyri</td><td class="c">女</td><td>1998<span class="hy">-</span>09<span class="hy">-</span>01</td><td>431121199811323456</td><td class="c">湖南长沙</td><td>13111233451</td><td class="c">销售部</td><td class="c"><a>修改</a><span class="vb">|</span> <a>删除</a></td></tr>
<tr><td>8</td><td>Yuan</td><td class="c">女</td><td>1998<span class="hy">-</span>09<span class="hy">-</span>01</td><td>431121199811323456</td><td class="c">湖南长沙</td><td>13111233451</td><td class="c">客服部</td><td class="c"><a>修改</a><span class="vb">|</span> <a>删除</a></td></tr>
<tr><td>9</td><td>Ufo</td><td class="c">男</td><td>1998<span class="hy">-</span>09<span class="hy">-</span>01</td><td>43112119980901116756</td><td class="c">湖南长沙</td><td>13111233451</td><td class="c">操作管理部</td><td class="c"><a>修改</a><span class="vb">|</span> <a>删除</a></td></tr>
<tr><td>10</td><td>Tang</td><td class="c">男</td><td>1998<span class="hy">-</span>09<span class="hy">-</span>01</td><td>4311211998090111675623</td><td class="c">湖南长沙</td><td>13111233451</td><td class="c">财务部</td><td class="c"><a>修改</a><span class="vb">|</span> <a>删除</a></td></tr>
<tr><td>11</td><td>Kris</td><td class="c">女</td><td>1998<span class="hy">-</span>09<span class="hy">-</span>01</td><td>431121199811323456</td><td class="c">湖南长沙</td><td>13111233451</td><td class="c">质量管理部</td><td class="c"><a>修改</a><span class="vb">|</span> <a>删除</a></td></tr>
</table>
  <div class="abs" style="left:1335px;top:242px;width:1px;height:253px;background:#444"></div>
  <div id="pgl">共 <b>2</b> 页 | 第 <b>1</b> 页</div>
  <div id="pgr" class="sim"><span class="vb">[</span><a>首页</a> <span class="vb">|</span> <a>上一页</a> <span class="vb">|</span> <a>下一页</a> <span class="vb">|</span> <a>末页</a><span class="vb">]</span> 转至<span class="vb">:</span> <span class="gi"></span><span class="go">Go</span></div>
</div>
<div id="status">
  <svg class="abs" style="left:1093px;top:4px" width="17" height="16" viewBox="0 0 17 16"><path d="M15.6 .8 C12 .6 9 2.4 6.6 5.6 L3.4 6 L1.6 8.4 L4.4 8.8 L7.4 11.8 L7.8 14.6 L10.2 12.8 L10.6 9.6 C13.8 7.2 15.6 4.4 15.6 .8 Z" fill="#fff" stroke="#9a9da6" stroke-width="1.1" stroke-linejoin="round"/><path d="M4.6 11.6 L1.4 14.8 M14 1 L2 14" stroke="#9a9da6" stroke-width="1"/></svg>
  <span class="abs" style="left:1117px;top:2px;font-size:12px;line-height:18px;color:#555;white-space:nowrap">加速器</span>
  <svg class="abs" style="left:1163px;top:4px" width="16" height="16" viewBox="0 0 16 16"><path d="M6 .8 H10 V5 H12.6 L8 9.8 L3.4 5 H6 Z" fill="#fff" stroke="#8d9099" stroke-width="1.1" stroke-linejoin="round"/><path d="M1 9 L3 9 L3 12.4 H13 V9 H15 V14.6 H1 Z" fill="#fff" stroke="#8d9099" stroke-width="1.1" stroke-linejoin="round"/></svg>
  <span class="abs" style="left:1187px;top:2px;font-size:12px;line-height:18px;color:#555;white-space:nowrap">下载</span>
  <svg class="abs" style="left:1222px;top:5px" width="17" height="15" viewBox="0 0 17 15"><path d="M5.6 3 V1 H11.4 V3" fill="none" stroke="#8d9099" stroke-width="1.2"/><rect x=".8" y="3" width="15.4" height="11" rx="1.6" fill="#fff" stroke="#8d9099" stroke-width="1.2"/><path d="M8.5 5.4 V11.6 M5.4 8.5 H11.6" stroke="#777a82" stroke-width="2"/></svg>
  <svg class="abs" style="left:1250px;top:4px" width="15" height="16" viewBox="0 0 15 16"><path d="M6 .8 H9 V2.6 H6 Z" fill="#fff" stroke="#8d9099"/><rect x=".8" y="2.8" width="13.4" height="2.6" rx=".8" fill="#fff" stroke="#8d9099" stroke-width="1.1"/><path d="M2.2 5.6 H12.8 L12 15 H3 Z" fill="#fff" stroke="#8d9099" stroke-width="1.1"/><path d="M5 7 V13.4 M7.5 7 V13.4 M10 7 V13.4" stroke="#8d9099" stroke-width="1.1"/></svg>
  <svg class="abs" style="left:1275px;top:4px" width="17" height="16" viewBox="0 0 17 16"><path d="M1 5.4 H4 L8.4 1.4 V14.6 L4 10.6 H1 Z" fill="#fff" stroke="#8d9099" stroke-width="1.1" stroke-linejoin="round"/><path d="M10.6 4.6 C12.2 6.4 12.2 9.6 10.6 11.4 M12.6 2.6 C15.4 5.4 15.4 10.6 12.6 13.4" fill="none" stroke="#8d9099" stroke-width="1.3"/></svg>
  <svg class="abs" style="left:1302px;top:5px" width="19" height="15" viewBox="0 0 19 15"><path d="M4.4 1 H17.4 V10.4 H4.4 Z" fill="#fff" stroke="#8d9099" stroke-width="1.2"/><path d="M1 11 H12.6 V13.6 H1 Z M3 13.8 H18" fill="#fff" stroke="#777a82" stroke-width="1.3"/></svg>
  <svg class="abs" style="left:1332px;top:4px" width="27" height="16" viewBox="0 0 27 16"><circle cx="6" cy="6" r="4.6" fill="#fff" stroke="#8d9099" stroke-width="1.6"/><circle cx="6" cy="6" r="1.8" fill="none" stroke="#b5b8c0" stroke-width="1"/><path d="M9.6 9.6 L13.6 13.6" stroke="#8d9099" stroke-width="2.6" stroke-linecap="round"/><path d="M18 5.6 H25 L21.5 9.6 Z" fill="#fff" stroke="#8d9099" stroke-width="1"/></svg>
</div>
<div id="task"><div class="abs" style="left:442px;top:0;width:48px;height:8px;background:#54585c"></div><div class="abs" style="left:1361px;top:0;width:1px;height:8px;background:#6a6e73"></div><div class="abs" style="left:1309px;top:6px;color:#fff;font:12px/12px 'Liberation Sans',sans-serif;white-space:nowrap">12:07</div></div>
</body>
</html>
